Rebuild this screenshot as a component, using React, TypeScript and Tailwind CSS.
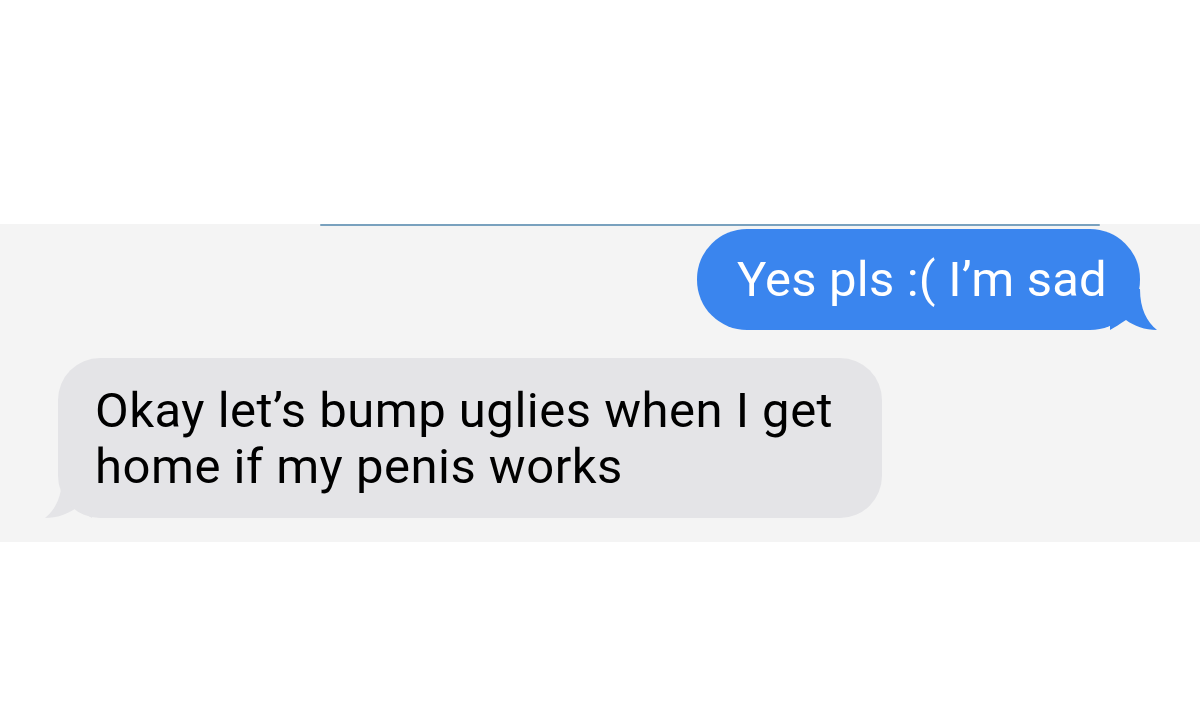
import React from "react";

const font = { fontFamily: "Roboto, 'Liberation Sans', Arial, sans-serif" };

// Outgoing tail, hooked off the bottom-right corner of the bubble
function BlueTail() {
  return (
    <svg className="absolute right-[-20px] bottom-0" width="50" height="41" viewBox="0 0 50 41">
      <path d="M30 0 C30 20 37 33 47 41 C35 41 24 37 16 31 C10 35 5 38 0 41 L0 0 Z" fill="#3a85ee" />
    </svg>
  );
}

// Incoming tail, mirrored onto the bottom-left corner
function GrayTail() {
  return (
    <svg className="absolute left-[-16px] bottom-0" width="50" height="41" viewBox="0 0 50 41">
      <path d="M20 0 C20 20 13 33 3 41 C15 41 26 37 34 31 C40 35 45 38 50 41 L50 0 Z" fill="#e4e4e7" />
    </svg>
  );
}

export default function App() {
  return (
    <div className="w-[1200px] h-[709px] bg-white flex flex-col overflow-hidden" style={font}>
      <div className="h-[224px] shrink-0 bg-white" />
      <div className="bg-[#f4f4f4] h-[318px] shrink-0 flex flex-col relative">
        <div className="absolute top-0 left-[320px] w-[780px] h-[2px] bg-[#5a8cb0] rounded-full opacity-80" />
        <div className="flex justify-end pr-[60px] pt-[5px]">
          <div className="relative">
            <div className="relative bg-[#3a85ee] text-white rounded-[50px] h-[101px] w-[443px] pl-[40px] flex items-center text-[49px] tracking-[0.2px]">
              Yes pls :( I’m sad
            </div>
            <BlueTail />
          </div>
        </div>
        <div className="flex pl-[58px] pt-[28px]">
          <div className="relative">
            <div className="relative z-10 bg-[#e4e4e7] text-black rounded-[42px] w-[824px] h-[160px] pl-[37px] pt-[25px] text-[49px] leading-[56px] tracking-[0.5px]">
              Okay let’s bump uglies when I get
              <br />
              home if my penis works
            </div>
            <GrayTail />
          </div>
        </div>
      </div>
      <div className="flex-1 bg-white" />
    </div>
  );
}
